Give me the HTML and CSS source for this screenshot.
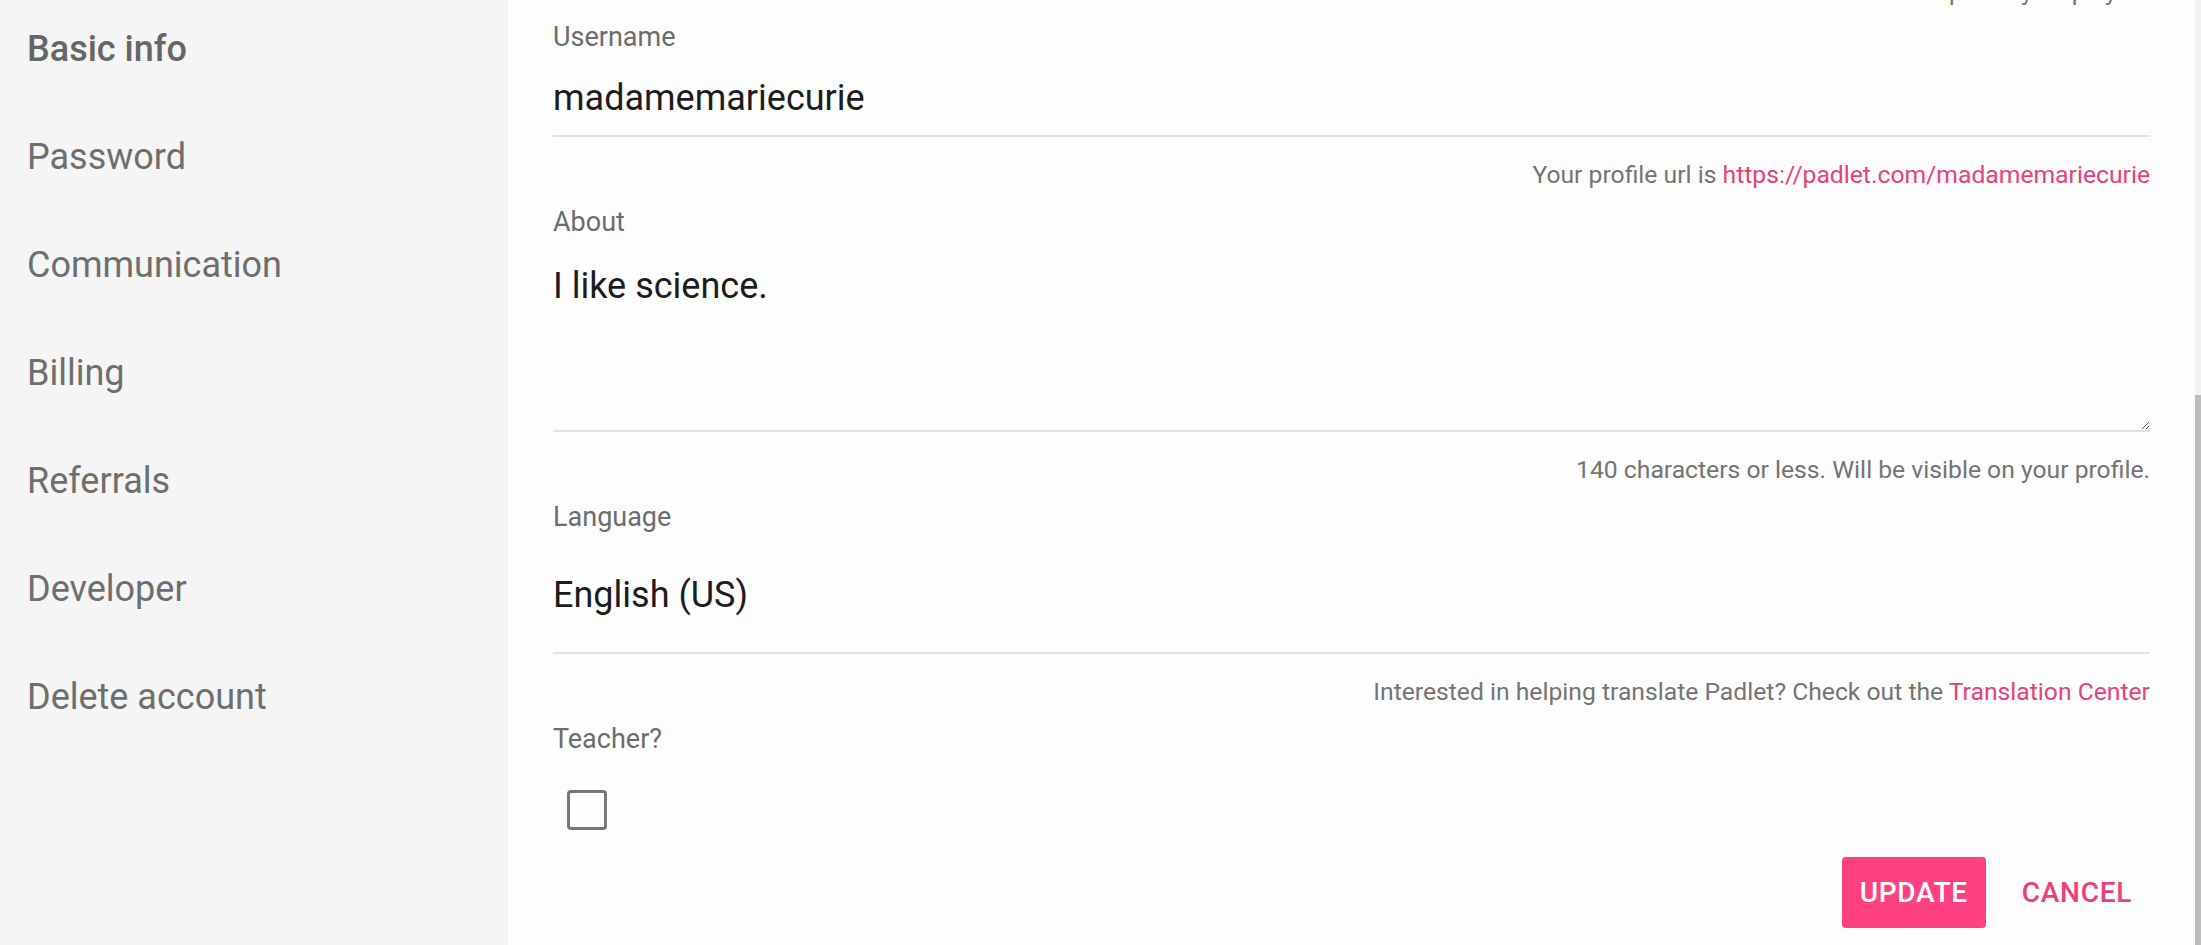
FILE: index.html
```html
<!DOCTYPE html>
<html lang="en">
<head>
<meta charset="utf-8">
<title>Settings – Basic info</title>
<link rel="stylesheet" href="styles.css">
</head>
<body>
<div class="page">
  <nav class="sidebar">
    <a class="nav-item active">Basic info</a>
    <a class="nav-item">Password</a>
    <a class="nav-item">Communication</a>
    <a class="nav-item">Billing</a>
    <a class="nav-item">Referrals</a>
    <a class="nav-item">Developer</a>
    <a class="nav-item">Delete account</a>
  </nav>
  <main class="main">
    <form class="form">
      <p class="hint hint-top">Your full name will be publicly displayed.</p>
      <label class="label" for="username">Username</label>
      <input id="username" class="text-input" type="text" value="madamemariecurie">
      <p class="hint">Your profile url is <a class="link">https://padlet.com/madamemariecurie</a></p>
      <label class="label" for="about">About</label>
      <textarea id="about" class="textarea">I like science.</textarea>
      <p class="hint">140 characters or less. Will be visible on your profile.</p>
      <label class="label">Language</label>
      <div class="select">English (US)</div>
      <p class="hint">Interested in helping translate Padlet? Check out the <a class="link">Translation Center</a></p>
      <label class="label">Teacher?</label>
      <div class="checkbox-row"><span class="checkbox"></span></div>
      <div class="actions">
        <button type="button" class="btn btn-primary">UPDATE</button>
        <button type="button" class="btn btn-text">CANCEL</button>
      </div>
    </form>
  </main>
  <div class="scrollbar"><div class="scrollbar-thumb"></div></div>
</div>
</body>
</html>
```

FILE: styles.css
```css
* {
  box-sizing: border-box;
}

html, body {
  margin: 0;
  padding: 0;
  height: 100%;
}

body {
  font-family: Roboto, "Liberation Sans", Arial, sans-serif;
  background: #fdfdfd;
  overflow: hidden;
}

.page {
  display: flex;
  height: 945px;
  overflow: hidden;
}

.sidebar {
  width: 508px;
  flex: 0 0 508px;
  background: #f5f5f5;
  display: flex;
  flex-direction: column;
}

.nav-item {
  display: block;
  padding: 28px 0 38px 27px;
  font-size: 36px;
  line-height: 42px;
  color: #6e6e6e;
  text-decoration: none;
}

.nav-item.active {
  color: #666666;
  font-weight: 500;
}

.main {
  flex: 1 1 auto;
  padding: 0 45px;
  background: #fdfdfd;
  min-width: 0;
}

.form {
  display: flex;
  flex-direction: column;
}

.hint {
  margin: 23px 0 1px;
  font-size: 24.7px;
  line-height: 30px;
  color: #747474;
  text-align: right;
  white-space: nowrap;
}

.hint-top {
  margin: -23.5px 0 -0.5px;
}

.link {
  color: #e8407a;
  text-decoration: none;
}

.label {
  display: block;
  margin-top: 15px;
  font-size: 27px;
  line-height: 32px;
  color: #6c6c6c;
}

.text-input,
.textarea,
.select {
  display: block;
  width: 100%;
  margin-top: 8px;
  font-family: Roboto, "Liberation Sans", Arial, sans-serif;
  font-size: 36px;
  line-height: 44px;
  color: #1c1c1c;
  background: transparent;
  border: 0;
  border-bottom: 2px solid #e2e2e2;
  border-radius: 0;
  outline: none;
}

.text-input {
  height: 76px;
  padding: 15px 0;
}

.textarea {
  height: 186px;
  padding: 18px 0 0;
  resize: vertical;
  overflow: hidden;
}

.select {
  padding: 32px 0 35px;
}

.checkbox-row {
  margin-top: 35px;
  padding-left: 14px;
  height: 40px;
  display: flex;
  align-items: center;
}

.checkbox {
  width: 40px;
  height: 40px;
  border: 3.5px solid #777777;
  border-radius: 4px;
}

.actions {
  margin-top: 27px;
  display: flex;
  justify-content: flex-end;
  gap: 18px;
}

.btn {
  font-family: Roboto, "Liberation Sans", Arial, sans-serif;
  font-size: 28px;
  line-height: 33px;
  letter-spacing: 0.7px;
  font-weight: 500;
  padding: 19px 18px;
  border: 0;
  border-radius: 4px;
  cursor: pointer;
}

.btn-primary {
  background: #ff4081;
  color: #ffffff;
}

.btn-text {
  background: transparent;
  color: #e8407a;
}

.scrollbar {
  flex: 0 0 6px;
  width: 6px;
  background: #f1f1f1;
  display: flex;
  flex-direction: column;
}

.scrollbar-thumb {
  margin-top: 395px;
  flex: 1 1 auto;
  background: #bdbdbd;
}
```
